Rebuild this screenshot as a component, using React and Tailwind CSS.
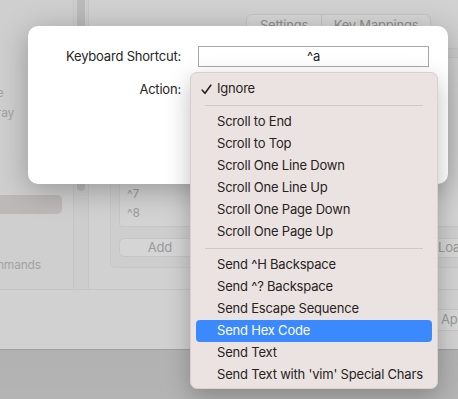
import React from "react";

const F = { fontFamily: "Inter, 'Liberation Sans', sans-serif" };

function MenuItem({ children, active, checked }) {
  return (
    <div
      className={
        "relative mx-[5px] h-[22px] flex items-center pl-[21px] rounded-[4px] " +
        (active ? "bg-[#3a89fe] text-white" : "text-[#262322]")
      }
    >
      {checked && (
        <svg className="absolute left-[5px] top-[6px]" width="11" height="11" viewBox="0 0 11 11">
          <path d="M1.2 6.2 L4 9.3 L9.8 1.2" fill="none" stroke="#262322" strokeWidth="1.6" strokeLinecap="round" strokeLinejoin="round" />
        </svg>
      )}
      {children}
    </div>
  );
}

function Sep() {
  return (
    <div className="h-[11px] flex items-center px-[14px]">
      <div className="h-px w-full bg-[#d2c9c7]" />
    </div>
  );
}

export default function App() {
  return (
    <div className="relative w-[458px] h-[399px] overflow-hidden bg-gradient-to-b from-[#a2a2a2] to-[#b4b4b4] text-[13px] tracking-[-0.2px]" style={F}>
      {/* background window */}
      <div className="h-[350px] bg-[#d1d1d1] flex flex-col border-b border-[#a0a0a0]">
        <div className="h-[290px] flex border-b border-[#c5c5c5]">
          {/* sidebar */}
          <div className="w-[74px] shrink-0 border-r border-[#c6c6c6] flex flex-col text-[12px] text-[#a3a3a3] bg-[#cfcfcf]">
            <div className="pt-[85px] pl-0 leading-[16px] -ml-[6px]">le</div>
            <div className="pt-[4px] leading-[16px] -ml-[10px]">Tray</div>
            <div className="mt-[74px] h-[19px] w-[62px] rounded-r-[5px] bg-[#bdb9b8]" />
            <div className="mt-[43px] leading-[16px] -ml-[22px]">Commands</div>
          </div>
          {/* scroll gutter */}
          <div className="w-[15px] shrink-0 border-r border-[#c6c6c6] bg-[#cdcdcd]">
            <div className="ml-[3px] w-[8px] h-[191px] rounded-b-full bg-[#bababa]" />
          </div>
          {/* main area */}
          <div className="flex-1 flex flex-col min-w-0">
            <div className="pt-[14px] pl-[157px] flex">
              <div className="flex h-[24px] rounded-[6px] border border-[#c4c4c4] bg-[#d6d6d6] text-[#8f8f8f] text-[13px] overflow-hidden">
                <div className="w-[75px] flex items-center justify-center border-r border-[#c4c4c4]">Settings</div>
                <div className="w-[108px] flex items-center justify-center">Key Mappings</div>
              </div>
            </div>
            <div className="ml-[21px] mt-[10px] w-[420px] h-[220px] rounded-[6px] border border-[#c8c8c8] bg-[#cecece] flex flex-col pl-[8px] pt-[8px]">
              <div className="flex-1 rounded-[3px] border border-[#c6c6c6] bg-[#d3d3d3] flex flex-col justify-end pb-[4px] text-[#9b9b9b] text-[12px]">
                <div className="pl-[7px] h-[19px] leading-[19px]">^7</div>
                <div className="pl-[7px] h-[19px] leading-[19px]">^8</div>
              </div>
              <div className="h-[40px] flex items-start pt-[11px]">
                <div className="w-[82px] h-[19px] rounded-[5px] border border-[#c6c6c6] bg-[#d5d5d5] text-[#999] flex items-center justify-center">Add</div>
                <div className="ml-[230px] w-[70px] h-[20px] rounded-[5px] border border-[#c6c6c6] bg-[#d5d5d5] text-[#999] flex items-center pl-[6px]">Load</div>
              </div>
            </div>
          </div>
        </div>
        <div className="flex-1 flex items-start pt-[19px] pl-[434px]">
          <div className="w-[70px] h-[22px] shrink-0 rounded-[5px] border border-[#c6c6c6] bg-[#d5d5d5] text-[#999] flex items-center pl-[6px]">Apply</div>
        </div>
      </div>

      {/* dialog sheet */}
      <div className="absolute left-[28px] top-[26px] w-[420px] h-[158px] bg-white rounded-[10px] shadow-[0_6px_30px_rgba(0,0,0,0.28)] text-[#262626]">
        <div className="flex items-center mt-[20px] h-[21px]">
          <div className="w-[153px] text-right">Keyboard Shortcut:</div>
          <div className="ml-[17px] w-[231px] h-[21px] border border-[#a8a8a8] flex items-center justify-center">^a</div>
        </div>
        <div className="flex items-center mt-[12px] h-[21px]">
          <div className="w-[153px] text-right">Action:</div>
        </div>
      </div>

      {/* popup menu */}
      <div className="absolute left-[190px] top-[72px] w-[248px] h-[317px] rounded-[7px] bg-[#ebe3e1] border border-[#d8d0ce] shadow-[0_8px_24px_rgba(0,0,0,0.25)] pt-[5px] flex flex-col">
        <MenuItem checked>Ignore</MenuItem>
        <Sep />
        <MenuItem>Scroll to End</MenuItem>
        <MenuItem>Scroll to Top</MenuItem>
        <MenuItem>Scroll One Line Down</MenuItem>
        <MenuItem>Scroll One Line Up</MenuItem>
        <MenuItem>Scroll One Page Down</MenuItem>
        <MenuItem>Scroll One Page Up</MenuItem>
        <Sep />
        <MenuItem>Send ^H Backspace</MenuItem>
        <MenuItem>Send ^? Backspace</MenuItem>
        <MenuItem>Send Escape Sequence</MenuItem>
        <MenuItem active>Send Hex Code</MenuItem>
        <MenuItem>Send Text</MenuItem>
        <MenuItem>Send Text with 'vim' Special Chars</MenuItem>
      </div>
    </div>
  );
}
